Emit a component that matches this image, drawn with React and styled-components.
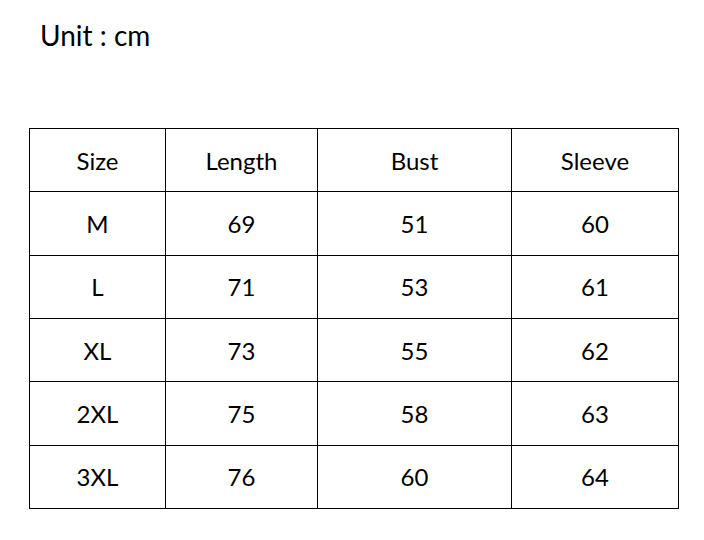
import React from "react";
import styled, { createGlobalStyle } from "styled-components";

const GlobalStyle = createGlobalStyle`
  html, body {
    margin: 0;
    padding: 0;
    background: #ffffff;
  }
  body {
    font-family: Lato, "Open Sans", "Liberation Sans", sans-serif;
    color: #000000;
  }
`;

const Page = styled.div`
  width: 704px;
  height: 540px;
  box-sizing: border-box;
  padding: 17px 0 0 29px;
  display: flex;
  flex-direction: column;
`;

const Unit = styled.div`
  font-size: 28px;
  line-height: 36px;
  padding-left: 11px;
  height: 111px;
`;

const Table = styled.table`
  border-collapse: collapse;
  table-layout: fixed;
  width: 650px;
`;

const Cell = styled.td`
  border: 1px solid #000;
  height: 62.33px;
  padding: 0;
  text-align: center;
  vertical-align: middle;
  font-size: 24px;
  width: ${(p) => p.$w}px;
`;

const columns = [
  { title: "Size", w: 135 },
  { title: "Length", w: 151 },
  { title: "Bust", w: 193 },
  { title: "Sleeve", w: 166 },
];

const rows = [
  ["M", 69, 51, 60],
  ["L", 71, 53, 61],
  ["XL", 73, 55, 62],
  ["2XL", 75, 58, 63],
  ["3XL", 76, 60, 64],
];

export default function App() {
  return (
    <>
      <GlobalStyle />
      <Page>
        <Unit>Unit : cm</Unit>
        <Table>
          <tbody>
            <tr>
              {columns.map((c) => (
                <Cell key={c.title} $w={c.w}>
                  {c.title}
                </Cell>
              ))}
            </tr>
            {rows.map((r) => (
              <tr key={r[0]}>
                {r.map((v, i) => (
                  <Cell key={i} $w={columns[i].w}>
                    {v}
                  </Cell>
                ))}
              </tr>
            ))}
          </tbody>
        </Table>
      </Page>
    </>
  );
}
